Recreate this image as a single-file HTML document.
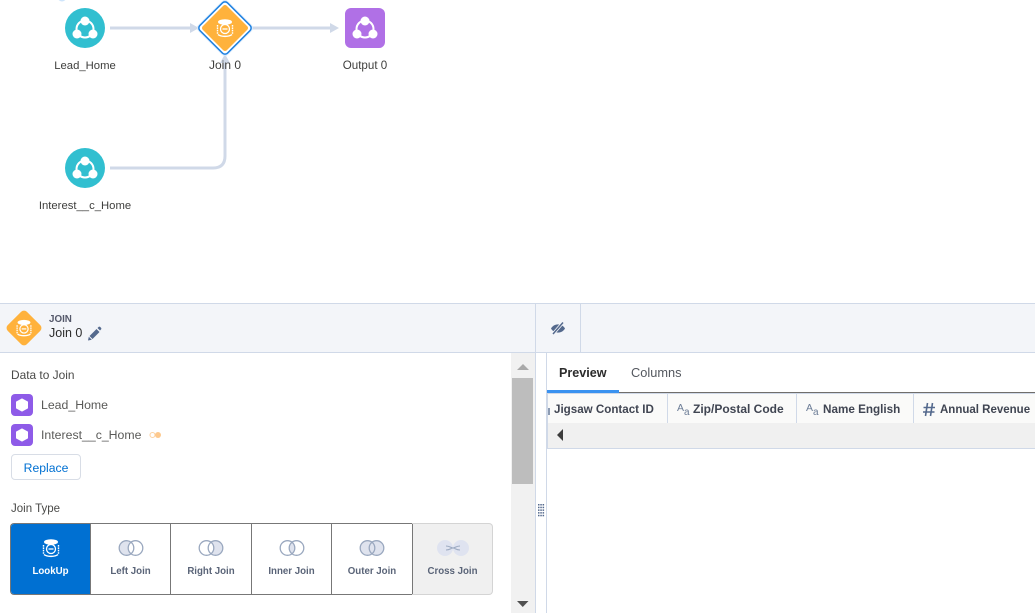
<!DOCTYPE html>
<html><head><meta charset="utf-8">
<style>
html,body{margin:0;padding:0;background:#fff}
body{width:1035px;height:613px;position:relative;overflow:hidden;font-family:"Liberation Sans",sans-serif;color:#3e3e3c}
.a{position:absolute}
.t{position:absolute;white-space:nowrap;line-height:16px}
.lbl{font-size:11.3px;text-align:center;color:#3e3e3c}
.cell{position:absolute;top:524px;height:70px;border-right:1px solid #777;box-sizing:border-box;text-align:center}
.cell span{position:absolute;left:0;right:0;top:41px;font-size:9.7px;font-weight:bold;color:#5a6478;line-height:14px}
.cell svg{position:absolute;left:50%;margin-left:-13px;top:13px}
.col{position:absolute;top:402px;font-size:11.6px;font-weight:bold;color:#404552;white-space:nowrap;line-height:16px}
.div{position:absolute;top:394px;height:29px;width:1px;background:#d0d9e8}
</style></head><body>
<svg class="a" style="left:0;top:0" width="400" height="230">
<defs>
<g id="net"><circle cx="0" cy="-8" r="4.500" fill="#fff"/><circle cx="-8" cy="5" r="4.500" fill="#fff"/><circle cx="8" cy="5" r="4.500" fill="#fff"/><circle cx="0" cy="0" r="8.500" fill="none" stroke="#fff" stroke-width="2"/></g>
<g id="db" fill="none" stroke="#fff"><ellipse cx="0" cy="-6" rx="7" ry="2.800" fill="#fff" stroke="none"/><path d="M-7.500-3v9M7.500-3v9" stroke-width="1.400" stroke-dasharray="1.600 .8"/><path d="M-7 6.500c3 2.500 11 2.500 14 0" stroke-width="1.400"/><circle cx="0" cy="1" r="4.500" stroke-width="1.300"/><path d="M-2.500 1h5" stroke-width="1.300"/></g>
</defs>
<path d="M110 28H193M253 28H333M110 168H213Q225 168 225 156V62" fill="none" stroke="#d0d9e8" stroke-width="3"/>
<path d="M190 23l9 5-9 5zM330 23l9 5-9 5zM220 63l5-9 5 9z" fill="#d0d9e8"/>
<circle cx="85" cy="28" r="20" fill="#31bfd0"/>
<circle cx="85" cy="168" r="20" fill="#31bfd0"/>
<use href="#net" x="85" y="29"/>
<use href="#net" x="85" y="169"/>
<rect x="345" y="8" width="40" height="40" rx="6" fill="#b070e6"/>
<use href="#net" x="365" y="29"/>
<g transform="translate(225 28) rotate(45)">
<rect x="-21" y="-21" width="42" height="42" rx="4" fill="#d6e8fb"/>
<rect x="-19.500" y="-19.500" width="39" height="39" rx="3.500" fill="#fff" stroke="#1b7fe0" stroke-width="1.500"/>
<rect x="-17" y="-17" width="34" height="34" rx="2.500" fill="#ffb23c"/>
</g>
<use href="#db" x="225" y="28"/>
<circle cx="62" cy="-3" r="4.500" fill="#cfe5fb"/>
</svg>
<div class="t lbl" style="left:35px;width:100px;top:58px">Lead_Home</div>
<div class="t lbl" style="left:175px;width:100px;top:57px;font-size:12px">Join 0</div>
<div class="t lbl" style="left:315px;width:100px;top:58px;font-size:11.600px">Output 0</div>
<div class="t lbl" style="left:15px;width:140px;top:198px">Interest__c_Home</div>

<div class="a" style="left:0;top:303px;width:1035px;height:50px;background:#f3f5f9;border-top:1px solid #d0d9e8;border-bottom:1px solid #d0d9e8;box-sizing:border-box"></div>
<div class="a" style="left:535px;top:304px;width:1px;height:309px;background:#d0d9e8"></div>
<div class="a" style="left:580px;top:304px;width:1px;height:48px;background:#d0d9e8"></div>
<div class="a" style="left:546px;top:353px;width:1px;height:260px;background:#d0d9e8"></div>

<svg class="a" style="left:5px;top:309px" width="38" height="38">
<g transform="translate(19 19) rotate(45)"><rect x="-13.500" y="-13.500" width="27" height="27" rx="4" fill="#ffb23c"/></g>
<use href="#db" transform="translate(19 19) scale(.92)"/>
</svg>
<div class="t" style="left:49px;top:312px;font-size:9.800px;font-weight:bold;color:#54586a">JOIN</div>
<div class="t" style="left:49px;top:325px;font-size:12.500px;color:#2b2b2b">Join 0</div>
<svg class="a" style="left:87px;top:326px" width="15" height="15" viewBox="0 0 15 15"><path d="M1 14.500l.8-3.800 3 3zM2.500 10l7-7 3 3-7 7zM10.500 2l1.300-1.200q.6-.4 1.200 0l1.200 1.200q.4.600 0 1.200l-1.200 1.300z" fill="#54698d"/></svg>
<svg class="a" style="left:550px;top:320px" width="16" height="16" viewBox="0 0 16 16"><path d="M1 8.500c3-5.500 11-5.500 14 0-3 5.500-11 5.500-14 0z" fill="#54698d"/><path d="M3 14L13 2.500" stroke="#f3f5f9" stroke-width="3.200"/><path d="M3 14L13 2.500" stroke="#54698d" stroke-width="1.500"/></svg>

<div class="t" style="left:11px;top:367px;font-size:11.900px;color:#4a4a48">Data to Join</div>
<svg class="a" style="left:11px;top:394px" width="22" height="52">
<rect width="22" height="22" rx="4" fill="#8e5be8"/><path d="M11 5l5.500 3v6l-5.500 3-5.500-3V8z" fill="#fff" stroke="#fff" stroke-linejoin="round"/>
<g transform="translate(0 30)"><rect width="22" height="22" rx="4" fill="#8e5be8"/><path d="M11 5l5.500 3v6l-5.500 3-5.500-3V8z" fill="#fff" stroke="#fff" stroke-linejoin="round"/></g>
</svg>
<div class="t" style="left:41px;top:397px;font-size:12.300px;color:#5a5a58">Lead_Home</div>
<div class="t" style="left:41px;top:427px;font-size:12.300px;color:#5a5a58">Interest__c_Home</div>
<svg class="a" style="left:148px;top:430px" width="15" height="10"><circle cx="4.500" cy="5" r="2.500" fill="none" stroke="#fdd3a4" stroke-width="1.100"/><circle cx="10" cy="5" r="3" fill="#fdc98e"/></svg>
<div class="a" style="left:11px;top:454px;width:70px;height:26px;border:1px solid #d8dde6;border-radius:4px;box-sizing:border-box;text-align:center;font-size:12.200px;line-height:26px;color:#0070d2">Replace</div>
<div class="t" style="left:11px;top:501px;font-size:11.500px;color:#4a4a48">Join Type</div>

<div class="a" style="left:10px;top:523px;width:403px;height:72px;border:1px solid #777;border-right:0;border-radius:4px 0 0 4px;box-sizing:border-box"></div>
<div class="a" style="left:412px;top:523px;width:81px;height:72px;background:#f0f0f0;border:1px solid #d4d4d4;border-left:0;border-radius:0 4px 4px 0;box-sizing:border-box"></div>
<div class="cell" style="left:11px;width:80px;background:#0070d2;border-radius:3px 0 0 3px">
<svg width="26" height="26" viewBox="-13 -11 26 26"><use href="#db"/></svg><span style="color:#fff">LookUp</span></div>
<div class="cell" style="left:91px;width:80px"><svg width="26" height="26" viewBox="0 0 26 26"><circle cx="8.500" cy="11" r="7.300" fill="#dfe3ee"/><path d="M13 5.250A7.300 7.300 0 0 1 13 16.750A7.300 7.300 0 0 1 13 5.250Z" fill="#fff"/><circle cx="8.500" cy="11" r="7.300" fill="none" stroke="#9aa8bf" stroke-width="1.300"/><circle cx="17.500" cy="11" r="7.300" fill="none" stroke="#9aa8bf" stroke-width="1.300"/></svg><span>Left Join</span></div>
<div class="cell" style="left:171px;width:81px"><svg width="26" height="26" viewBox="0 0 26 26"><circle cx="17.500" cy="11" r="7.300" fill="#dfe3ee"/><path d="M13 5.250A7.300 7.300 0 0 1 13 16.750A7.300 7.300 0 0 1 13 5.250Z" fill="#fff"/><circle cx="8.500" cy="11" r="7.300" fill="none" stroke="#9aa8bf" stroke-width="1.300"/><circle cx="17.500" cy="11" r="7.300" fill="none" stroke="#9aa8bf" stroke-width="1.300"/></svg><span>Right Join</span></div>
<div class="cell" style="left:252px;width:80px"><svg width="26" height="26" viewBox="0 0 26 26"><path d="M13 5.250A7.300 7.300 0 0 1 13 16.750A7.300 7.300 0 0 1 13 5.250Z" fill="#dfe3ee"/><circle cx="8.500" cy="11" r="7.300" fill="none" stroke="#9aa8bf" stroke-width="1.300"/><circle cx="17.500" cy="11" r="7.300" fill="none" stroke="#9aa8bf" stroke-width="1.300"/></svg><span>Inner Join</span></div>
<div class="cell" style="left:332px;width:81px"><svg width="26" height="26" viewBox="0 0 26 26"><circle cx="8.500" cy="11" r="7.300" fill="#dfe3ee"/><circle cx="17.500" cy="11" r="7.300" fill="#dfe3ee"/><circle cx="8.500" cy="11" r="7.300" fill="none" stroke="#9aa8bf" stroke-width="1.300"/><circle cx="17.500" cy="11" r="7.300" fill="none" stroke="#9aa8bf" stroke-width="1.300"/></svg><span>Outer Join</span></div>
<div class="cell" style="left:413px;width:79px;border:0"><svg width="36" height="26" viewBox="0 0 36 26" style="margin-left:-18px"><circle cx="10" cy="11" r="8" fill="#dfe3f0"/><circle cx="26" cy="11" r="8" fill="#dfe3f0"/><path d="M11 9c4 0 5 2 7 2s3-2 7-2M11 13c4 0 5-2 7-2s3 2 7 2" fill="none" stroke="#9aa8bf" stroke-width="1"/></svg><span>Cross Join</span></div>

<div class="a" style="left:511px;top:353px;width:24px;height:260px;background:#f1f1f1"></div>
<div class="a" style="left:512px;top:378px;width:21px;height:106px;background:#bdbdbd"></div>
<svg class="a" style="left:511px;top:353px" width="24" height="260"><path d="M6 17l6-6 6 6z" fill="#a9a9a9"/><path d="M6 248h11.500l-5.750 6z" fill="#505050"/></svg>
<svg class="a" style="left:537px;top:504px" width="8" height="13" fill="#54698d"><g id="d"><rect x="1" y="0" width="1.500" height="1.500"/><rect x="3.300" y="0" width="1.500" height="1.500"/><rect x="5.600" y="0" width="1.500" height="1.500"/></g><use href="#d" y="2.700"/><use href="#d" y="5.400"/><use href="#d" y="8.100"/><use href="#d" y="10.800"/></svg>

<div class="t" style="left:559px;top:365px;font-size:12.600px;font-weight:bold;color:#2b2b2b">Preview</div>
<div class="t" style="left:631px;top:365px;font-size:12.800px;color:#54585f">Columns</div>
<div class="a" style="left:547px;top:392px;width:488px;height:1px;background:#706e6b"></div>
<div class="a" style="left:547px;top:390px;width:72px;height:3px;background:#3a92f0"></div>
<div class="a" style="left:547px;top:393px;width:488px;height:1px;background:#d0d9e8"></div>
<div class="a" style="left:547px;top:394px;width:488px;height:29px;background:#fafaf9"></div>
<div class="a" style="left:547px;top:423px;width:488px;height:25px;background:#f0f0f0;border-bottom:1px solid #d0d9e8;box-sizing:content-box"></div>
<div class="a" style="left:547px;top:394px;width:1px;height:54px;background:#d0d9e8"></div>
<div class="div" style="left:667px"></div><div class="div" style="left:796px"></div><div class="div" style="left:913px"></div>
<div class="a" style="left:548px;top:408px;width:2px;height:7px;background:#8c9bb3"></div>
<div class="col" style="left:554px">Jigsaw Contact ID</div>
<div class="t" style="left:677px;top:400px;font-size:10.500px;color:#6b7c96">A<sub style="font-size:10px;vertical-align:-4px;line-height:0">a</sub></div>
<div class="col" style="left:693px;font-size:12px;top:401px">Zip/Postal Code</div>
<div class="t" style="left:806px;top:400px;font-size:10.500px;color:#6b7c96">A<sub style="font-size:10px;vertical-align:-4px;line-height:0">a</sub></div>
<div class="col" style="left:823px;font-size:11.700px">Name English</div>
<svg class="a" style="left:922px;top:402px" width="14" height="15" viewBox="0 0 14 15"><path d="M5.500 1L3.500 14M10.500 1L8.500 14M1.500 5.500H13M1 10H12.500" stroke="#54698d" stroke-width="1.600" fill="none"/></svg>
<div class="col" style="left:940px;font-size:11.500px">Annual Revenue</div>
<svg class="a" style="left:556px;top:429px" width="8" height="13"><path d="M7 0v12L1 6z" fill="#3c3c3c"/></svg>
</body></html>
